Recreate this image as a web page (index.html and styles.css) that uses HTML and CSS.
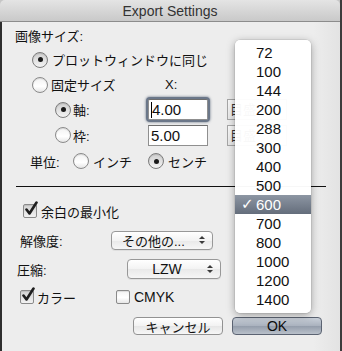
FILE: index.html
```html
<!DOCTYPE html>
<html>
<head>
<meta charset="utf-8">
<link rel="stylesheet" href="styles.css">
</head>
<body>
<div class="window">
  <div class="titlebar">Export Settings</div>
  <div class="content">
    <div class="heading">画像サイズ:</div>
    <div class="row r1"><span class="radio on"></span><span class="lbl">プロットウィンドウに同じ</span></div>
    <div class="row r2"><span class="radio"></span><span class="lbl w-fixed">固定サイズ</span><span class="lbl w-x">X:</span><span class="lbl ghost">Y:</span></div>
    <div class="row r3"><span class="radio on"></span><span class="lbl w-axis">軸:</span><span class="field focus"><span class="caret"></span>4.00</span><span class="unit">目盛</span></div>
    <div class="row r4"><span class="radio"></span><span class="lbl w-axis">枠:</span><span class="field">5.00</span><span class="unit">目盛</span></div>
    <div class="row r5"><span class="lbl w-unit">単位:</span><span class="radio"></span><span class="lbl w-inch">インチ</span><span class="radio on"></span><span class="lbl">センチ</span></div>
    <div class="sep"></div>
    <div class="row r6"><span class="check on"><svg viewBox="0 0 16 16" width="16" height="16"><path d="M3.5 8.5 L6.5 12.5 L13.5 1.5" fill="none" stroke="#1e1e1e" stroke-width="2.6" stroke-linecap="round" stroke-linejoin="round"/></svg></span><span class="lbl">余白の最小化</span></div>
    <div class="row r7"><span class="lbl w-res">解像度:</span><span class="popup p-res"><span class="ptext">その他の...</span><span class="arrows"><i class="up"></i><i class="down"></i></span></span></div>
    <div class="row r8"><span class="lbl w-comp">圧縮:</span><span class="popup p-comp"><span class="ptext center">LZW</span><span class="arrows"><i class="up"></i><i class="down"></i></span></span></div>
    <div class="row r9"><span class="check on"><svg viewBox="0 0 16 16" width="16" height="16"><path d="M3.5 8.5 L6.5 12.5 L13.5 1.5" fill="none" stroke="#1e1e1e" stroke-width="2.6" stroke-linecap="round" stroke-linejoin="round"/></svg></span><span class="lbl w-color">カラー</span><span class="check"></span><span class="lbl">CMYK</span></div>
    <div class="row buttons"><span class="btn cancel">キャンセル</span><span class="btn ok">OK</span></div>
  </div>
  <div class="menu">
    <div class="item">72</div>
    <div class="item">100</div>
    <div class="item">144</div>
    <div class="item">200</div>
    <div class="item">288</div>
    <div class="item">300</div>
    <div class="item">400</div>
    <div class="item">500</div>
    <div class="item sel"><span class="tick">✓</span>600</div>
    <div class="item">700</div>
    <div class="item">800</div>
    <div class="item">1000</div>
    <div class="item">1200</div>
    <div class="item">1400</div>
  </div>
</div>
</body>
</html>
```
FILE: styles.css
```css
html, body {
  margin: 0;
  padding: 0;
  background: #c6c6c6;
}
.window {
  position: relative;
  width: 342px;
  height: 351px;
  overflow: hidden;
  font-family: "Liberation Sans", "Noto Sans CJK JP", sans-serif;
  font-size: 13px;
  color: #111;
  box-sizing: border-box;
  border-right: 2px solid #3c3c3c;
}
.titlebar {
  height: 21px;
  border-bottom: 1px solid #8c8c8c;
  border-radius: 5px 5px 0 0;
  background: linear-gradient(#e4e4e4, #c9c9c9);
  text-align: center;
  line-height: 22px;
  font-size: 14px;
  color: #333;
}
.content {
  height: 329px;
  background: linear-gradient(90deg, #ededed 92%, #e3e3e3);
  border-left: 2px solid #2e2e2e;
  padding-top: 5px;
  box-sizing: border-box;
}
.heading {
  height: 20px;
  line-height: 20px;
  padding-left: 13px;
}
.row {
  display: flex;
  align-items: center;
}
.lbl { white-space: nowrap; }
.r1, .r2, .r3 { height: 25px; }
.r4, .r5 { height: 26px; }
.r1 .radio, .r2 .radio { margin-left: 30px; }
.r1 .lbl { margin-left: 4px; }
.r2 .w-fixed { margin-left: 3px; width: 114px; }
.w-x { width: 77px; }
.ghost { color: #f1f1f1; }
.r3 .radio, .r4 .radio { margin-left: 53px; }
.w-axis { margin-left: 2px; width: 75px; }
.r5 .w-unit { margin-left: 28px; width: 43px; }
.w-inch { margin-left: 4px; width: 55px; }
.r5 .radio + .lbl { margin-left: 4px; }

.radio {
  width: 16px;
  height: 16px;
  border-radius: 50%;
  box-sizing: border-box;
  border: 1px solid #8a8a8a;
  background: linear-gradient(#f2f2f2, #ffffff 60%, #e6e6e6);
  box-shadow: inset 0 1px 1px rgba(0,0,0,0.12);
  display: flex;
  align-items: center;
  justify-content: center;
  flex: none;
}
.radio.on {
  background: linear-gradient(#cfcfcf, #f3f3f3);
  border-color: #7c7c7c;
}
.radio.on::after {
  content: "";
  width: 5px;
  height: 5px;
  border-radius: 50%;
  background: #1a1a1a;
}

.field {
  position: relative;
  width: 60px;
  height: 21px;
  box-sizing: border-box;
  border: 1px solid #8f8f8f;
  border-top-color: #6e6e6e;
  background: #fff;
  font-size: 15px;
  line-height: 20px;
  padding-left: 2px;
  flex: none;
}
.field.focus {
  box-shadow: 0 0 0 2px #6b7789, 0 0 2px 3px rgba(107,119,137,0.5);
  border-radius: 2px;
  padding-left: 3px;
}
.caret {
  position: absolute;
  left: 2px;
  top: 2px;
  width: 1px;
  height: 16px;
  background: #000;
}
.unit {
  margin-left: 19px;
  width: 60px;
  height: 21px;
  box-sizing: border-box;
  border: 1px solid #a6a6a6;
  background: linear-gradient(#fafafa, #e8e8e8);
  line-height: 19px;
  padding-left: 2px;
  color: #333;
  flex: none;
}

.sep {
  margin: 12px 0 0 14px;
  width: 310px;
  height: 1px;
  background: #111;
}
.r6 { height: 24px; margin-top: 12px; }
.r6 .check { margin-left: 21px; }
.r6 .lbl { margin-left: 4px; }

.check {
  position: relative;
  width: 14px;
  height: 14px;
  box-sizing: border-box;
  border: 1px solid #8a8a8a;
  border-radius: 2px;
  background: linear-gradient(#f4f4f4, #ffffff 55%, #e6e6e6);
  box-shadow: inset 0 1px 1px rgba(0,0,0,0.1);
  flex: none;
}
.check.on { background: linear-gradient(#d2d2d2, #f2f2f2); }
.check svg {
  position: absolute;
  left: -1px;
  top: -4px;
}

.r7 { height: 34px; }
.w-res { margin-left: 18px; width: 91px; }
.r8 { height: 24px; }
.w-comp { margin-left: 15px; width: 110px; }

.popup {
  position: relative;
  display: flex;
  align-items: center;
  height: 19px;
  box-sizing: border-box;
  border: 1px solid #989898;
  border-radius: 4px;
  background: linear-gradient(#ffffff, #f3f3f3 50%, #e9e9e9 51%, #f6f6f6);
  box-shadow: 0 1px 0 rgba(0,0,0,0.06);
  flex: none;
}
.p-res { width: 102px; }
.p-comp { width: 94px; height: 20px; }
.ptext { padding-left: 10px; flex: 1; }
.ptext.center { padding-left: 0; text-align: center; padding-right: 14px; font-size: 14px; }
.p-res .ptext { padding-left: 10px; }
.arrows {
  position: absolute;
  right: 7px;
  top: 50%;
  transform: translateY(-50%);
  display: flex;
  flex-direction: column;
  gap: 2px;
}
.arrows i {
  display: block;
  width: 0;
  height: 0;
  border-left: 3px solid transparent;
  border-right: 3px solid transparent;
}
.arrows .up { border-bottom: 3px solid #3a3a3a; }
.arrows .down { border-top: 3px solid #3a3a3a; }

.r9 { height: 32px; }
.r9 .check:first-child { margin-left: 18px; }
.w-color { margin-left: 3px; width: 79px; }
.r9 .check + .lbl:last-child { margin-left: 4px; font-size: 14px; }

.buttons { height: 26px; }
.btn {
  height: 18px;
  box-sizing: border-box;
  border-radius: 4px;
  display: flex;
  align-items: center;
  justify-content: center;
  flex: none;
}
.cancel {
  margin-left: 131px;
  width: 90px;
  border: 1px solid #929292;
  background: linear-gradient(#ffffff, #f2f2f2 50%, #e6e6e6 51%, #f7f7f7);
}
.ok {
  margin-left: 9px;
  width: 90px;
  border: 1px solid #5b6372;
  background: linear-gradient(#c9d0d9, #a9b1bd 50%, #949dab 51%, #b9c0ca);
  font-size: 14px;
  color: #0d0d0d;
}

.menu {
  position: absolute;
  left: 235px;
  top: 40px;
  width: 76px;
  height: 273px;
  box-sizing: border-box;
  padding: 3px 0 4px;
  background: rgba(255,255,255,0.97);
  border-radius: 5px;
  box-shadow: 0 2px 9px rgba(0,0,0,0.35), 0 0 0 0.5px rgba(0,0,0,0.12);
}
.item {
  position: relative;
  height: 19px;
  line-height: 19px;
  padding-left: 21px;
  font-size: 15px;
  color: #111;
}
.item.sel {
  color: #fff;
  background: linear-gradient(#8d96a3, #646d7b);
}
.tick {
  position: absolute;
  left: 6px;
  top: 0;
  font-family: "DejaVu Sans", sans-serif;
  font-size: 15px;
}
```
